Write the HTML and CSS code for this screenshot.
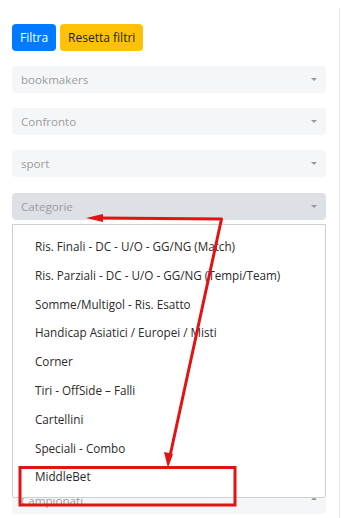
FILE: index.html
```html
<!DOCTYPE html>
<html>
<head>
<meta charset="utf-8">
<link rel="stylesheet" href="styles.css">
</head>
<body>
<div class="page">
  <div class="content">
    <div class="actions">
      <button class="btn btn-primary">Filtra</button>
      <button class="btn btn-warning">Resetta filtri</button>
    </div>
    <div class="select">bookmakers<span class="caret"></span></div>
    <div class="select">Confronto<span class="caret"></span></div>
    <div class="select">sport<span class="caret"></span></div>
    <div class="select-wrap">
      <div class="select active">Categorie<span class="caret"></span></div>
      <ul class="menu">
        <li>Ris. Finali - DC - U/O - GG/NG (Match)</li>
        <li>Ris. Parziali - DC - U/O - GG/NG (Tempi/Team)</li>
        <li>Somme/Multigol - Ris. Esatto</li>
        <li>Handicap Asiatici / Europei / Misti</li>
        <li>Corner</li>
        <li>Tiri - OffSide – Falli</li>
        <li>Cartellini</li>
        <li>Speciali - Combo</li>
        <li>MiddleBet</li>
      </ul>
    </div>
    <div class="select last">Campionati<span class="caret up"></span></div>
  </div>
  <svg class="annot" width="342" height="518" viewBox="0 0 342 518">
    <rect x="20" y="459.5" width="215" height="37.5" fill="none" stroke="#e01414" stroke-width="3"/>
    <polyline points="170,448 221.5,211 100,210" fill="none" stroke="#e01414" stroke-width="3" stroke-linejoin="round"/>
    <polygon points="86,210 103,206 103,214" fill="#e01414"/>
    <polygon points="168,460 164,444 173,446" fill="#e01414"/>
  </svg>
</div>
</body>
</html>
```
FILE: styles.css
```css
html, body {
  margin: 0;
  padding: 0;
  background: #fff;
}
body {
  width: 342px;
  height: 518px;
  overflow: hidden;
  font-family: "Open Sans", "Noto Sans", sans-serif;
  font-size: 12px;
  color: #212529;
}
.page {
  position: relative;
  width: 342px;
  height: 518px;
}
.content {
  margin-top: 8px;
  width: 340px;
  height: 510px;
  border-right: 1px solid #e6e6e6;
  padding: 16px 0 0 12px;
  box-sizing: border-box;
}
.actions {
  display: flex;
  gap: 4px;
}
.btn {
  height: 27px;
  border: none;
  border-radius: 4px;
  padding: 0 8px;
  font-family: inherit;
  font-size: 12px;
  line-height: 27px;
}
.btn-primary {
  background: #007bff;
  color: #fff;
}
.btn-warning {
  background: #ffc107;
  color: #212529;
}
.select {
  position: relative;
  width: 314px;
  height: 27px;
  margin-top: 15px;
  box-sizing: border-box;
  padding-left: 9px;
  line-height: 27px;
  background: #f5f6f7;
  border-radius: 4px;
  color: #9c9c9c;
  font-size: 11.6px;
}
.select-wrap {
  position: relative;
  margin-top: 16px;
}
.select-wrap .select {
  margin-top: 0;
}
.select.active {
  background: #dde0e4;
}
.select.last {
  margin-top: 267px;
}
.caret {
  position: absolute;
  right: 9px;
  top: 12px;
  width: 0;
  height: 0;
  border-left: 3px solid transparent;
  border-right: 3px solid transparent;
  border-top: 3px solid #999;
}
.caret.up {
  border-top: none;
  border-bottom: 3px solid #999;
  top: 10px;
}
.menu {
  position: absolute;
  left: 0;
  top: 31px;
  width: 314px;
  height: 274px;
  margin: 0;
  padding: 7px 0;
  box-sizing: border-box;
  list-style: none;
  background: #fff;
  border: 1px solid #cfcfcf;
  border-radius: 0 0 3px 3px;
  z-index: 2;
}
.menu li {
  height: 28.8px;
  line-height: 28.8px;
  padding-left: 22px;
  color: #2b2b2b;
  font-size: 11.7px;
  white-space: nowrap;
}
.annot {
  position: absolute;
  left: 0;
  top: 0;
  z-index: 5;
  pointer-events: none;
}
```
